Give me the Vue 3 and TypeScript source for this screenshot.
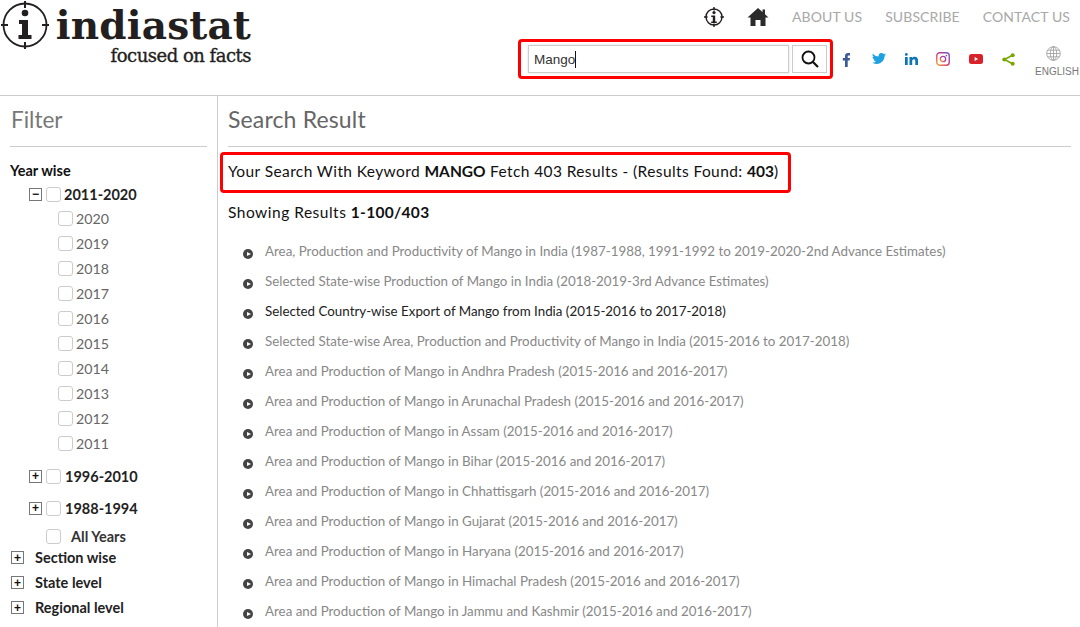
<script setup lang="ts">
const years = ["2020", "2019", "2018", "2017", "2016", "2015", "2014", "2013", "2012", "2011"];
const closedGroups = ["1996-2010", "1988-1994"];
const levels = ["Section wise", "State level", "Regional level"];

const results = [
  { title: "Area, Production and Productivity of Mango in India (1987-1988, 1991-1992 to 2019-2020-2nd Advance Estimates)" },
  { title: "Selected State-wise Production of Mango in India (2018-2019-3rd Advance Estimates)" },
  { title: "Selected Country-wise Export of Mango from India (2015-2016 to 2017-2018)", active: true },
  { title: "Selected State-wise Area, Production and Productivity of Mango in India (2015-2016 to 2017-2018)" },
  { title: "Area and Production of Mango in Andhra Pradesh (2015-2016 and 2016-2017)" },
  { title: "Area and Production of Mango in Arunachal Pradesh (2015-2016 and 2016-2017)" },
  { title: "Area and Production of Mango in Assam (2015-2016 and 2016-2017)" },
  { title: "Area and Production of Mango in Bihar (2015-2016 and 2016-2017)" },
  { title: "Area and Production of Mango in Chhattisgarh (2015-2016 and 2016-2017)" },
  { title: "Area and Production of Mango in Gujarat (2015-2016 and 2016-2017)" },
  { title: "Area and Production of Mango in Haryana (2015-2016 and 2016-2017)" },
  { title: "Area and Production of Mango in Himachal Pradesh (2015-2016 and 2016-2017)" },
  { title: "Area and Production of Mango in Jammu and Kashmir (2015-2016 and 2016-2017)" },
];
</script>

<template>
  <div class="page">
    <header class="header">
      <div class="logo">
        <svg class="logo-mark" width="50" height="50" viewBox="0 0 50 50">
          <circle cx="25" cy="25" r="21.500" fill="none" stroke="#231f20" stroke-width="1.800" />
          <path d="M25 1v7M25 42v7M1 25h7M42 25h7" stroke="#231f20" stroke-width="2" />
          <circle cx="25" cy="13" r="3.300" fill="#231f20" />
          <path d="M19 20h9v15h3.500v4h-13v-4h3.500v-11h-3z" fill="#231f20" />
        </svg>
        <div class="logo-text">
          <div class="logo-name">indiastat</div>
          <div class="logo-tag">focused on facts</div>
        </div>
      </div>

      <div class="header-right">
        <nav class="top-nav">
          <svg class="nav-info" width="20" height="20" viewBox="0 0 50 50">
            <circle cx="25" cy="25" r="20" fill="none" stroke="#231f20" stroke-width="3.500" />
            <path d="M25 0v9M25 41v9M0 25h9M41 25h9" stroke="#231f20" stroke-width="3.500" />
            <circle cx="25" cy="14" r="4" fill="#231f20" />
            <path d="M18 21h10v15h4v4h-14v-4h4v-11h-4z" fill="#231f20" />
          </svg>
          <svg class="nav-home" width="22" height="20" viewBox="0 0 22 20">
            <path d="M11 1L0.500 10.500H3.500V19H8.500V13H13.500V19H18.500V10.500H21.500L18 7.300V2.500H15.500V5L11 1Z" fill="#2b2b2b" />
          </svg>
          <a class="nav-link">ABOUT US</a>
          <a class="nav-link">SUBSCRIBE</a>
          <a class="nav-link">CONTACT US</a>
        </nav>

        <div class="tools">
          <div class="search-box">
            <div class="search-input">Mango<span class="caret"></span></div>
            <button class="search-btn">
              <svg width="18" height="18" viewBox="0 0 18 18">
                <circle cx="7.500" cy="7.500" r="6" fill="none" stroke="#111" stroke-width="1.800" />
                <path d="M12 12l5 5" stroke="#111" stroke-width="2.200" />
              </svg>
            </button>
          </div>

          <div class="socials">
            <svg width="12" height="15" viewBox="0 0 12 15">
              <path d="M4 15V8.500H1.800V6H4V4.200C4 2 5.200 1 7 1H9V3.400H7.700C6.900 3.400 6.700 3.800 6.700 4.400V6H9L8.600 8.500H6.700V15Z" fill="#3b5998" />
            </svg>
            <svg width="14" height="12" viewBox="0 0 14 12">
              <path d="M14 1.500C13.500 1.800 12.900 1.900 12.300 2 12.900 1.600 13.400 1 13.600 .3 13 .7 12.400 .9 11.700 1 11.100 .4 10.300 0 9.500 0 7.600 0 6.200 1.700 6.600 3.600 4.200 3.500 2.100 2.300 .9 .5 .2 1.700 .6 3.300 1.800 4.100 1.300 4.100 .9 4 .5 3.800 .5 5.100 1.400 6.300 2.800 6.600 2.400 6.700 1.900 6.700 1.500 6.600 1.900 7.700 2.900 8.500 4.100 8.500 3 9.400 1.500 9.800 0 9.600 1.300 10.500 2.800 11 4.400 11 9.800 11 12.800 6.500 12.600 2.800 13.200 2.500 13.700 2 14 1.500Z" fill="#1da1e2" />
            </svg>
            <svg width="13" height="12" viewBox="0 0 13 12">
              <path d="M0 4H2.700V12H0ZM1.350 0A1.400 1.400 0 1 1 1.350 2.800 1.400 1.400 0 0 1 1.350 0ZM4.500 4H7V5.100C7.500 4.300 8.400 3.800 9.500 3.800 12 3.800 13 5.200 13 7.600V12H10.300V8.100C10.300 7 10 6.200 9 6.200 7.900 6.200 7.200 7 7.200 8.200V12H4.500Z" fill="#0c75b5" />
            </svg>
            <svg width="14" height="14" viewBox="0 0 14 14">
              <defs>
                <linearGradient id="ig" x1="0" y1="1" x2="1" y2="0">
                  <stop offset="0" stop-color="#f5a623" />
                  <stop offset="0.500" stop-color="#d6307f" />
                  <stop offset="1" stop-color="#6a5acd" />
                </linearGradient>
              </defs>
              <rect x="0.750" y="0.750" width="12.500" height="12.500" rx="3" fill="none" stroke="url(#ig)" stroke-width="1.400" />
              <circle cx="7" cy="7" r="2.700" fill="none" stroke="url(#ig)" stroke-width="1.300" />
              <circle cx="10.400" cy="3.600" r="0.800" fill="#c13584" />
            </svg>
            <svg width="14" height="10" viewBox="0 0 14 10">
              <rect width="14" height="10" rx="2.500" fill="#d8232a" />
              <path d="M5.600 3L9.200 5 5.600 7Z" fill="#fff" />
            </svg>
            <svg width="13" height="13" viewBox="0 0 13 13">
              <path d="M10.500 2.200L2.500 6.500L10.500 10.800" fill="none" stroke="#78a800" stroke-width="1.600" />
              <circle cx="10.700" cy="2.200" r="2" fill="#78a800" />
              <circle cx="2.300" cy="6.500" r="2" fill="#78a800" />
              <circle cx="10.700" cy="10.800" r="2" fill="#78a800" />
            </svg>
          </div>

          <div class="lang">
            <svg class="globe" width="15" height="15" viewBox="0 0 15 15" fill="none" stroke="#999" stroke-width="0.800">
              <circle cx="7.500" cy="7.500" r="6.800" />
              <ellipse cx="7.500" cy="7.500" rx="3.200" ry="6.800" />
              <path d="M7.500 .7v13.600M.7 7.500h13.600M1.600 4.200h11.800M1.600 10.800h11.800" />
            </svg>
            <span>ENGLISH</span>
          </div>
        </div>
      </div>
    </header>

    <div class="body">
      <aside class="filter">
        <h2 class="filter-title">Filter</h2>
        <div class="filter-label">Year wise</div>

        <div class="group open">
          <span class="toggle">&minus;</span>
          <span class="check"></span>
          <span class="group-name">2011-2020</span>
        </div>
        <ul class="years">
          <li v-for="y in years" :key="y" class="year">
            <span class="check"></span>
            <span>{{ y }}</span>
          </li>
        </ul>

        <div v-for="g in closedGroups" :key="g" class="group closed">
          <span class="toggle">+</span>
          <span class="check"></span>
          <span class="group-name">{{ g }}</span>
        </div>

        <div class="all-years">
          <span class="check"></span>
          <span>All Years</span>
        </div>

        <div v-for="l in levels" :key="l" class="level">
          <span class="toggle">+</span>
          <span>{{ l }}</span>
        </div>
      </aside>

      <main class="results">
        <h1 class="results-title">Search Result</h1>
        <div class="summary">
          Your Search With Keyword <b>MANGO</b> Fetch 403 Results - (Results Found: <b>403</b>)
        </div>
        <div class="showing">Showing Results <b>1-100/403</b></div>
        <ul class="result-list">
          <li v-for="r in results" :key="r.title" class="result" :class="{ active: r.active }">
            <span class="bullet"></span>
            <span>{{ r.title }}</span>
          </li>
        </ul>
      </main>
    </div>
  </div>
</template>

<style>
html,
body {
  margin: 0;
  background: #fff;
  overflow: hidden;
}
</style>

<style scoped>
.page {
  width: 1080px;
  height: 627px;
  overflow: hidden;
  font-family: Lato, "Open Sans", sans-serif;
  color: #111;
}

/* header */
.header {
  height: 95px;
  border-bottom: 1px solid #ccc;
  display: flex;
  justify-content: space-between;
}

.logo {
  display: flex;
  align-items: flex-start;
}

.logo-mark {
  flex: none;
}

.logo-text {
  margin-left: 5px;
  width: 196px;
  color: #231f20;
  font-family: "DejaVu Serif", serif;
  text-align: right;
}

.logo-name {
  font-size: 39px;
  line-height: 40px;
  margin-top: 5px;
  font-weight: 700;
  letter-spacing: 0.15px;
  white-space: nowrap;
}

.logo-tag {
  font-size: 18px;
  line-height: 20px;
  margin-top: 1px;
  font-weight: 400;
  -webkit-text-stroke: 0.35px #231f20;
  letter-spacing: -0.5px;
  white-space: nowrap;
}

.header-right {
  display: flex;
  flex-direction: column;
  align-items: flex-end;
}

.top-nav {
  display: flex;
  align-items: center;
  height: 33px;
  padding-right: 10px;
  box-sizing: border-box;
}

.nav-info {
  margin-right: 23px;
}

.nav-home {
  margin-right: 23px;
}

.nav-link {
  font-size: 14px;
  color: #a8a8a8;
  margin-left: 23px;
  letter-spacing: 0.1px;
}

.nav-home + .nav-link {
  margin-left: 0;
}

.tools {
  display: flex;
  align-items: center;
  margin-top: 6px;
  padding-right: 1px;
}

.search-box {
  display: flex;
  align-items: center;
  gap: 3px;
  width: 315px;
  height: 40px;
  box-sizing: border-box;
  border: 3px solid #f00;
  border-radius: 4px;
  padding: 0 3px 0 7px;
}

.search-input {
  width: 261px;
  height: 28px;
  box-sizing: border-box;
  border: 1px solid #ccc;
  box-shadow: 0 0 2px rgba(0, 0, 0, 0.15);
  padding: 1px 0 0 5px;
  font-family: "Liberation Sans", sans-serif;
  font-size: 13.500px;
  line-height: 26px;
  color: #333;
  display: flex;
  align-items: center;
}

.caret {
  width: 1px;
  height: 17px;
  background: #111;
}

.search-btn {
  width: 35px;
  height: 28px;
  padding: 0;
  border: 1px solid #ccc;
  background: #fff;
  display: flex;
  align-items: center;
  justify-content: center;
}

.socials {
  display: flex;
  align-items: center;
  justify-content: space-between;
  margin-left: 8px;
  width: 174px;
}

.lang {
  display: flex;
  flex-direction: column;
  align-items: center;
  margin-left: 20px;
  margin-top: 4px;
  font-family: "Liberation Sans", sans-serif;
  font-size: 10px;
  color: #777;
  gap: 5px;
}

.globe {
  margin-right: 8px;
}

/* body */
.body {
  display: flex;
}

.filter {
  width: 218px;
  height: 531px;
  flex: none;
  box-sizing: border-box;
  border-right: 1px solid #ccc;
  padding-left: 10px;
  padding-right: 10px;
  font-size: 14.500px;
}

.filter-title {
  margin: 0 0 14px;
  height: 51px;
  box-sizing: border-box;
  border-bottom: 1px solid #ccc;
  font-size: 22.500px;
  line-height: 47px;
  font-weight: 400;
  color: #777;
  padding-left: 1px;
}

.filter-label {
  font-weight: 700;
  line-height: 20px;
}

.check {
  display: inline-block;
  box-sizing: border-box;
  width: 15px;
  height: 15px;
  border: 1px solid #ccc;
  border-radius: 3px;
  flex: none;
}

.toggle {
  display: flex;
  align-items: center;
  justify-content: center;
  width: 11px;
  height: 11px;
  border: 1px solid #777;
  color: #111;
  font-size: 12px;
  line-height: 1;
  flex: none;
  font-family: "Liberation Sans", sans-serif;
}

.group {
  display: flex;
  align-items: center;
  padding-left: 19px;
  gap: 4px;
  font-weight: 700;
  height: 20px;
  color: #222;
}

.group.open {
  margin-top: 3px;
}

.group.open .group-name {
  margin-left: -1px;
}

.group.closed {
  margin-top: 12px;
}

.years {
  list-style: none;
  margin: 2px 0 -2px;
  padding: 0 0 0 48px;
}

.year {
  display: flex;
  align-items: center;
  gap: 3px;
  height: 25px;
  color: #666;
  font-size: 14.200px;
}

.all-years {
  display: flex;
  align-items: center;
  padding-left: 36px;
  gap: 10px;
  height: 20px;
  margin-top: 8px;
  font-weight: 700;
  color: #333;
}

.level {
  display: flex;
  align-items: center;
  height: 25px;
  gap: 11px;
  padding-left: 1px;
  font-weight: 700;
  color: #222;
}

.all-years + .level {
  margin-top: -1px;
}

/* results */
.results {
  flex: 1;
  padding: 0 9px 0 10px;
  min-width: 0;
}

.results-title {
  margin: 0;
  height: 51px;
  box-sizing: border-box;
  border-bottom: 1px solid #ccc;
  font-size: 23px;
  line-height: 47px;
  letter-spacing: 0.15px;
  font-weight: 400;
  color: #666;
}

.summary {
  width: 571px;
  height: 41px;
  margin: 5px 0 0 -8px;
  box-sizing: border-box;
  border: 3px solid #f00;
  border-radius: 4px;
  padding-left: 5px;
  line-height: 33px;
  font-size: 15.500px;
  letter-spacing: 0.4px;
  white-space: nowrap;
}

.summary b {
  letter-spacing: 0;
}

.showing {
  margin-top: 9px;
  font-size: 15.500px;
  line-height: 20px;
  letter-spacing: 0.5px;
}

.showing b {
  letter-spacing: 0.3px;
}

.result-list {
  list-style: none;
  margin: 14px 0 0;
  padding: 0;
}

.result {
  display: flex;
  align-items: center;
  height: 30px;
  padding-left: 15px;
  font-size: 13.350px;
  color: #888;
  white-space: nowrap;
}

.result.active {
  color: #222;
}

.bullet {
  position: relative;
  width: 10px;
  height: 10px;
  border-radius: 50%;
  background: #444;
  margin-right: 12px;
  margin-top: 6px;
  flex: none;
}

.bullet::after {
  content: "";
  position: absolute;
  left: 3.500px;
  top: 2.500px;
  border-left: 4px solid #fff;
  border-top: 2.500px solid transparent;
  border-bottom: 2.500px solid transparent;
}
</style>
